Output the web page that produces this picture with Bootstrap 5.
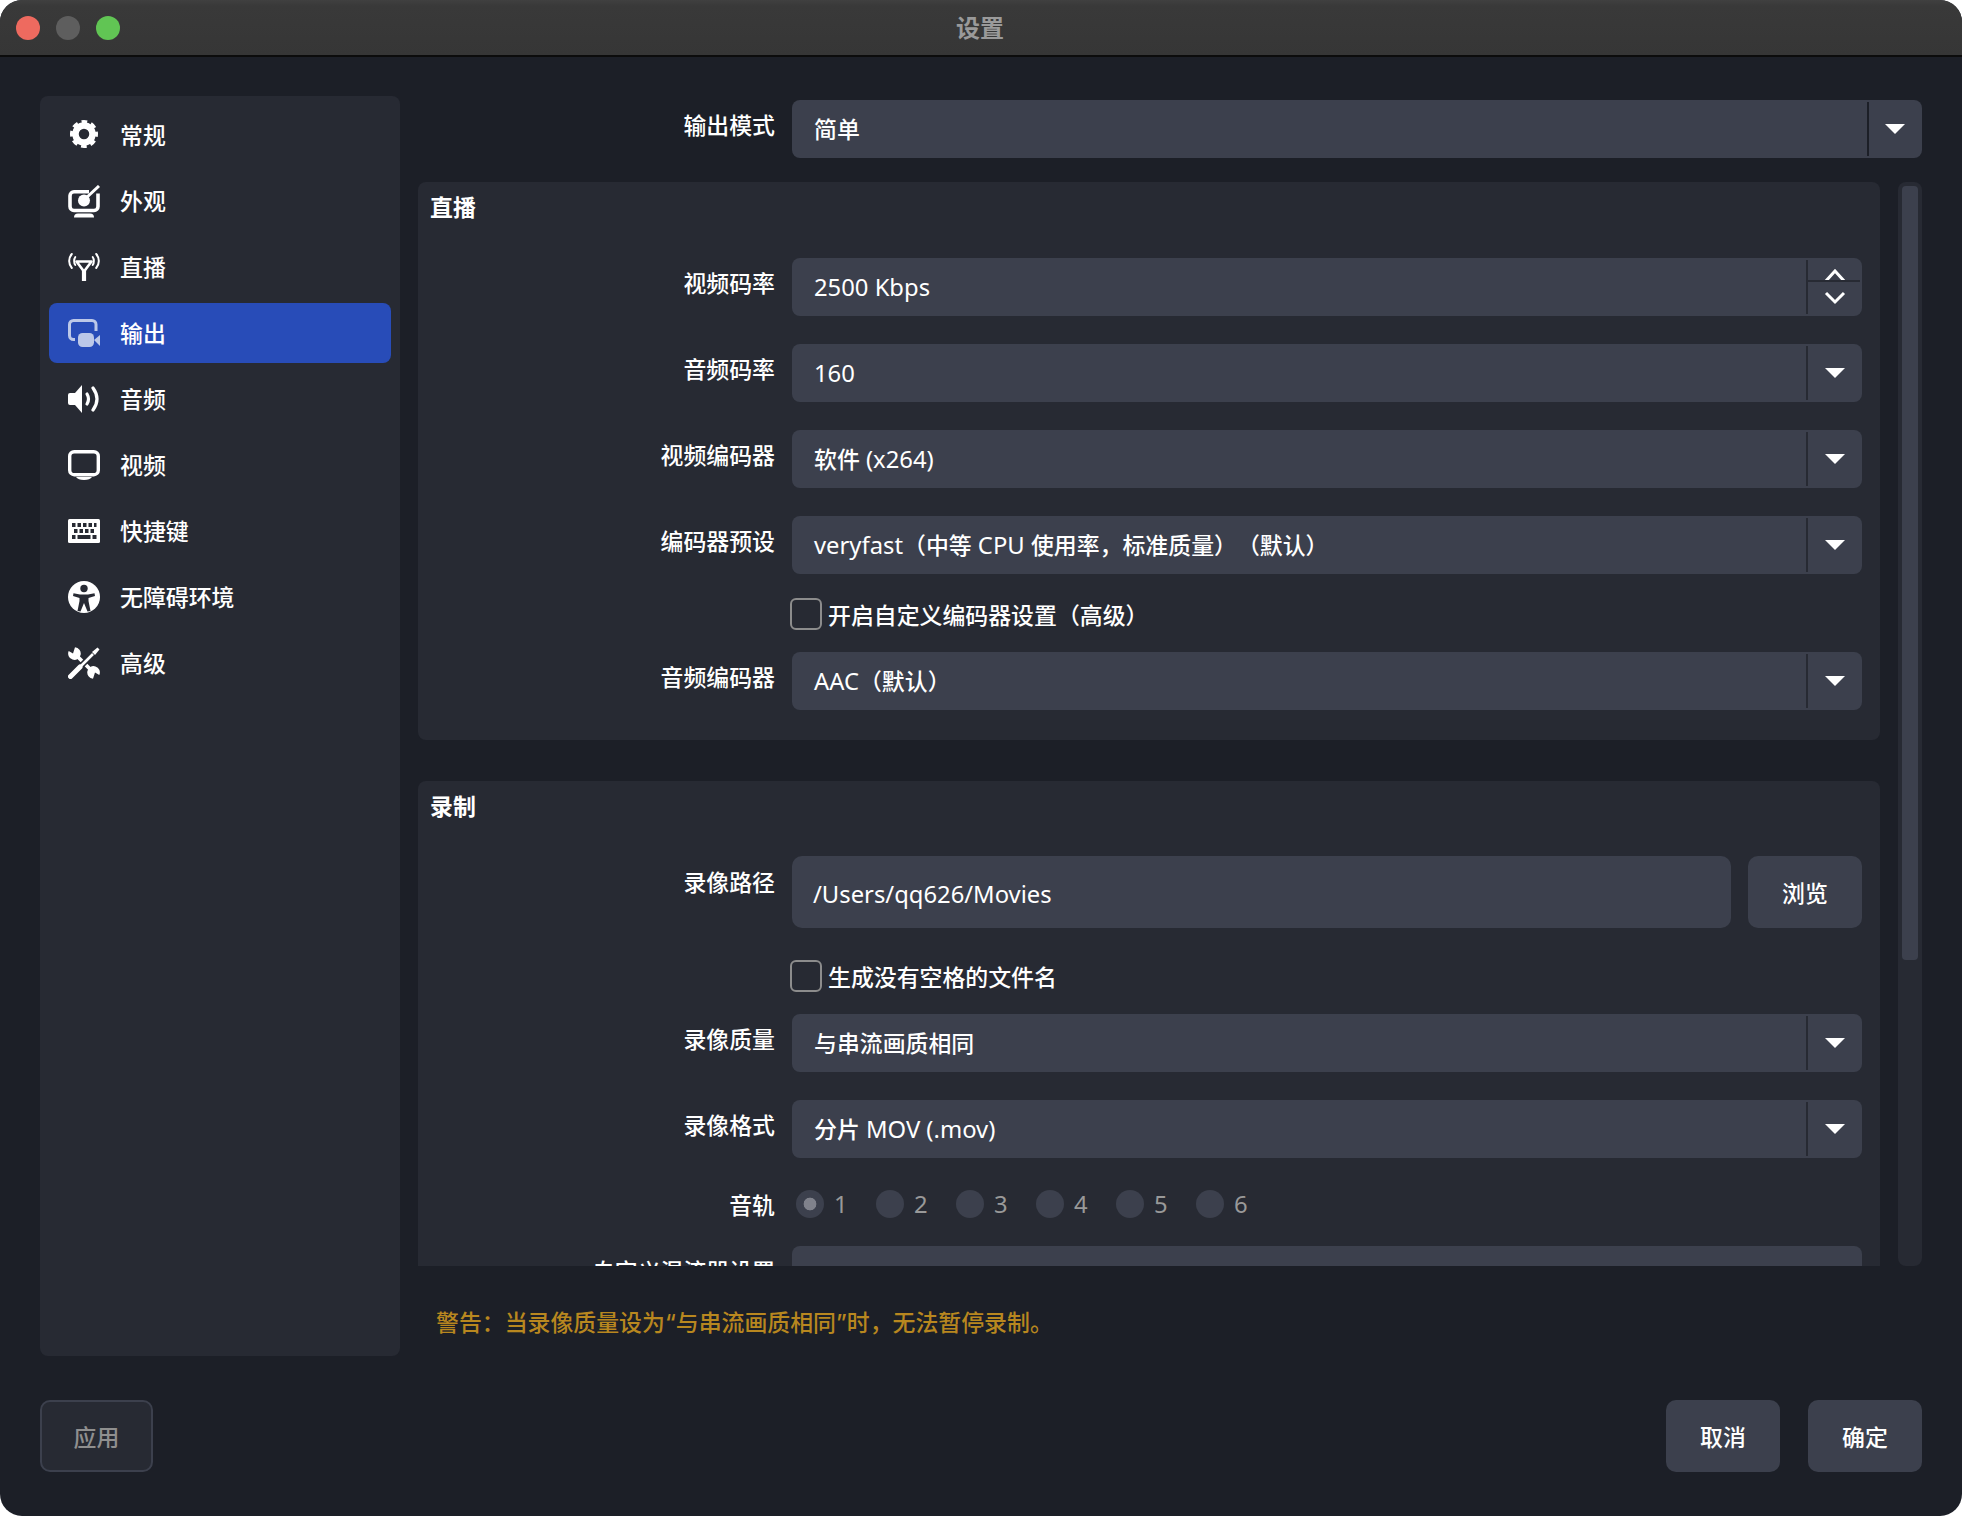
<!DOCTYPE html>
<html lang="zh-CN">
<head>
<meta charset="utf-8">
<title>设置</title>
<link href="https://cdn.jsdelivr.net/npm/bootstrap@5.3.0/dist/css/bootstrap.min.css" rel="stylesheet">
<style>
html,body{height:100%;margin:0;background:#fff}
body{font-family:"Noto Sans CJK SC","Noto Sans",sans-serif;font-size:22.9px;color:#fff;overflow:hidden;text-spacing-trim:space-all}
.lt{font-family:"Noto Sans",sans-serif;font-size:23.8px;font-weight:400}
.qt{font-family:"Inter",sans-serif}
.win{width:1962px;height:1516px;background:#1c1f27;border-radius:22px;overflow:hidden}
.tbar{height:57px;background:linear-gradient(#404040,#393939 6px,#363636);border-bottom:2px solid #0c0c0c;position:relative;flex:none}
.light{width:24px;height:24px;border-radius:50%}
.lights{padding-left:16px;gap:16px;height:55px}
.wtitle{position:absolute;left:0;right:0;top:0;line-height:53px;text-align:center;color:#9a9a9a;font-weight:700;font-size:24px;padding-right:2px}
.wbody{padding:39px 40px 44px}
.side{width:360px;height:1260px;background:#272a33;border-radius:8px;padding:9px;flex:none;gap:6px}
.side .nav-link{height:60px;color:#fff;padding:0 0 0 19px;gap:20px;border-radius:8px;font-weight:500;line-height:1;font-size:22.9px}
.side .nav-link.active{background:#284cb8;color:#fff}
.side .nav-link span{margin-bottom:2px}
.ico{width:32px;flex:none;display:block}
.rcol{margin-left:18px;width:1504px;padding-top:4px}
.frow{gap:17px}
.flabel{width:357px;text-align:right;font-weight:500;margin:0 0 9px;flex:none;padding:0}
.ctl.input-group{height:58px;flex:1 1 0;width:auto;flex-wrap:nowrap;background:#3c404d;border-radius:8px;padding:2px;min-width:0}
.ctl .form-control{background:transparent;border:0;color:#fff;font-size:22.9px;font-weight:500;padding:0 0 0 20px;line-height:53.5px;border-radius:0;font-family:inherit;white-space:pre;height:54px}
.ctl .input-group-text{width:54px;background:transparent;border:0;border-left:2px solid #272a33;border-radius:0!important;padding:0 0 0 1px;justify-content:center;margin:0!important}
.ctl.top .input-group-text{border-left-color:#1c1f27;width:53px;padding:0}
.tri{width:20px;height:10px;display:block}
.ctl .spin{flex-direction:column;align-items:stretch;padding:0}
.spin span{flex:1 1 0;display:flex;align-items:center;justify-content:center;overflow:hidden;padding-left:1px}
.spin span:first-child{flex:0 0 22px;border-bottom:2px solid #272a33;align-items:flex-end}
.spin svg{display:block;flex:none}
.scrollrow{gap:18px;margin-top:24px;height:1084px}
.scrollpane{width:1462px;height:1084px;overflow:hidden;flex:none}
.grp{background:#272a33;border-radius:8px;padding:0 18px 30px 0}
.grp+.grp{margin-top:41px}
.gtitle{padding-left:12px;font-weight:700;height:76px;padding-top:8px;line-height:32px;margin:0;font-size:22.9px}
.g2 .gtitle{height:75px;padding-top:8px}
.mb-row{margin-bottom:28px}
.chk{padding-left:372px;gap:6px;height:32px}
.chk .form-check-input{width:32px;height:32px;margin:0;background-color:transparent;border:2px solid #8c8c8c;border-radius:6px;float:none;flex:none}
.chk label{line-height:29px;padding-top:1px;font-weight:500}
.c1{margin:24px 0 22px}
.c2{margin:32px 0 22px}
.pathlabel.flabel{margin-bottom:22px}
.tfield.form-control{height:72px;flex:1 1 0;width:auto;background:#3c404d;border:0;border-radius:10px;color:#fff;font-size:22.9px;padding:0 21px;line-height:74px;white-space:pre}
.btnx.btn{width:114px;height:72px;background:#3c404d;border:0;border-radius:10px;color:#fff;font-size:22.9px;font-weight:500;padding:0;flex:none}
.btnx.off.btn{width:113px;background:#272a33;border:2px solid #3c404d;color:#8f8f8f;opacity:1}
.radios{height:28px;margin-bottom:28px;margin-top:32px}
.rset{margin-left:4px}
.rit{width:80px;gap:10px;margin:0;padding:0;min-height:0;flex:none}
.rit .form-check-input{width:28px;height:28px;background-color:#3c404d;border:0;margin:0;float:none;opacity:1;background-image:none;flex:none}
.rit .form-check-input:checked{background-image:radial-gradient(circle,#80828c 6px,transparent 6.7px);background-color:#3c404d}
.rit label{opacity:1!important;color:#999;line-height:30px}
.sbar{width:24px;height:1084px;background:#272a33;border-radius:8px;padding:4px;flex:none}
.sthumb{height:774px;background:#3c404d;border-radius:4px}
.warn{color:#b8871f;font-weight:500;padding-left:18px;margin-top:41px;line-height:28px}
.fbar{margin-top:44px}
.fgap{gap:28px}
</style>
</head>
<body>
<div class="win d-flex flex-column">
  <div class="tbar">
    <div class="lights d-flex align-items-center">
      <div class="light" style="background:#ee6a5f"></div>
      <div class="light" style="background:#5e5e5e"></div>
      <div class="light" style="background:#61c554"></div>
    </div>
    <div class="wtitle">设置</div>
  </div>
  <div class="wbody flex-grow-1">
    <div class="d-flex">
      <div class="side nav nav-pills flex-column flex-nowrap">
        <a class="nav-link d-flex align-items-center" href="#">
          <svg class="ico" viewBox="0 0 32 32" height="32"><circle cx="16" cy="15" r="8.500" fill="none" stroke="#fff" stroke-width="6.500"/><circle cx="16" cy="15" r="12.300" fill="none" stroke="#fff" stroke-width="3.400" stroke-dasharray="5.600 4.060" stroke-dashoffset="2.800"/></svg><span>常规</span></a>
        <a class="nav-link d-flex align-items-center" href="#">
          <svg class="ico" viewBox="0 0 32 33" height="33"><path d="M21 6.800H6a4 4 0 0 0-4 4V21.500a4 4 0 0 0 4 4h20a4 4 0 0 0 4-4V8.500" fill="none" stroke="#fff" stroke-width="3.600"/><circle cx="16" cy="15.500" r="6" fill="#fff"/><path d="M17 14 31 1" stroke="#fff" stroke-width="3" fill="none"/><path d="M6 32.500a4 4 0 0 1 4-4h12a4 4 0 0 1 4 4z" fill="#fff"/></svg><span>外观</span></a>
        <a class="nav-link d-flex align-items-center" href="#">
          <svg class="ico" viewBox="0 0 32 28" height="28"><path d="M8.500 8.500H23.500L16 18.500Z" fill="none" stroke="#fff" stroke-width="2.600" stroke-linejoin="round"/><path d="M16 17V28" stroke="#fff" stroke-width="4.200"/><g fill="none" stroke="#fff" stroke-width="2" stroke-linecap="round"><path d="M3.800 1C.3 5 .3 11 3.800 15"/><path d="M7.300 4C5.800 6 5.800 10 7.300 12"/><path d="M28.200 1C31.700 5 31.700 11 28.200 15"/><path d="M24.700 4C26.200 6 26.200 10 24.700 12"/></g></svg><span>直播</span></a>
        <a class="nav-link active d-flex align-items-center" href="#">
          <svg class="ico" viewBox="0 0 32 28" height="28"><path d="M7 20.500H5.500a4 4 0 0 1-4-4V5.500a4 4 0 0 1 4-4H24a4 4 0 0 1 4 4V12" fill="none" stroke="#bcc8e8" stroke-width="3"/><rect x="10" y="14" width="16" height="14" rx="4.500" fill="#bcc8e8"/><path d="M26 21 32 16V27Z" fill="#bcc8e8"/></svg><span>输出</span></a>
        <a class="nav-link d-flex align-items-center" href="#">
          <svg class="ico" viewBox="0 0 32 28" height="28"><path d="M14 0 7 8H2Q0 8 0 10V18Q0 20 2 20H7L14 28Z" fill="#fff"/><g fill="none" stroke="#fff" stroke-width="3.200" stroke-linecap="round"><path d="M19 9Q22 14 19 19"/><path d="M25 3Q33 14 25 25"/></g></svg><span>音频</span></a>
        <a class="nav-link d-flex align-items-center" href="#">
          <svg class="ico" viewBox="0 0 32 30" height="30"><rect x="1.700" y="1.700" width="28.600" height="23" rx="4.500" fill="none" stroke="#fff" stroke-width="3.400"/><path d="M8 27H24Q22 30 16 30T8 27Z" fill="#fff"/></svg><span>视频</span></a>
        <a class="nav-link d-flex align-items-center" href="#">
          <svg class="ico" viewBox="0 0 32 24" height="24"><rect width="32" height="24" rx="1.500" fill="#fff"/><g fill="#272a33"><rect x="4" y="4" width="3.500" height="4"/><rect x="9.500" y="4" width="3.500" height="4"/><rect x="15" y="4" width="3.500" height="4"/><rect x="20.500" y="4" width="3.500" height="4"/><rect x="26" y="4" width="2.500" height="4"/><rect x="6" y="10" width="3.500" height="4"/><rect x="11.500" y="10" width="3.500" height="4"/><rect x="17" y="10" width="3.500" height="4"/><rect x="22.500" y="10" width="3.500" height="4"/><rect x="4" y="16" width="3.500" height="4"/><rect x="9.500" y="16" width="13" height="4"/><rect x="24.500" y="16" width="4" height="4"/></g></svg><span>快捷键</span></a>
        <a class="nav-link d-flex align-items-center" href="#">
          <svg class="ico" viewBox="0 0 32 32" height="32"><circle cx="16" cy="16" r="16" fill="#fff"/><circle cx="16" cy="7.500" r="3.700" fill="#272a33"/><path d="M5.500 12.300 12 13.500H20L26.500 12.300 27 15 20.500 17V20L22.500 30 19.500 30.500 16 22 12.500 30.500 9.500 30 11.500 20V17L5 15Z" fill="#272a33"/></svg><span>无障碍环境</span></a>
        <a class="nav-link d-flex align-items-center" href="#">
          <svg class="ico" viewBox="0 0 32 32" height="32"><path d="M.7 4 5 6.500 7 .3A6.300 6.300 0 1 1 .7 4Z" fill="#fff"/><path d="M31.300 28 27 25.500 25 31.700A6.300 6.300 0 1 1 31.300 28Z" fill="#fff"/><path d="M9 9 23 23" stroke="#fff" stroke-width="3.800"/><path d="M5 27 25 7" stroke="#272a33" stroke-width="6"/><path d="M2.500 29.500 12 20" stroke="#fff" stroke-width="5" stroke-linecap="round"/><path d="M11 21 25 7" stroke="#fff" stroke-width="2.600"/><path d="M24 5 29.500 .5 31.500 2.500 27 8Z" fill="#fff"/></svg><span>高级</span></a>
      </div>
      <div class="rcol">
        <div class="frow d-flex align-items-center">
          <label class="flabel form-label">输出模式</label>
          <div class="ctl top input-group"><div class="form-control">简单</div><div class="input-group-text"><svg class="tri" viewBox="0 0 20 10"><path d="M0 0H20L10 10Z" fill="#fff"/></svg></div></div>
        </div>
        <div class="scrollrow d-flex">
          <div class="scrollpane">
            <section class="grp g1">
              <h2 class="gtitle">直播</h2>
              <div class="frow mb-row d-flex align-items-center"><label class="flabel form-label">视频码率</label>
                <div class="ctl input-group"><div class="form-control"><span class="lt">2500 Kbps</span></div><div class="input-group-text spin d-flex"><span><svg width="22" height="11" viewBox="0 0 22 11"><path d="M1 13 11 2 21 13" fill="none" stroke="#fff" stroke-width="3"/></svg></span><span><svg width="22" height="14" viewBox="0 0 22 14"><path d="M2 2 11 11 20 2" fill="none" stroke="#fff" stroke-width="3"/></svg></span></div></div></div>
              <div class="frow mb-row d-flex align-items-center"><label class="flabel form-label">音频码率</label>
                <div class="ctl input-group"><div class="form-control"><span class="lt">160</span></div><div class="input-group-text"><svg class="tri" viewBox="0 0 20 10"><path d="M0 0H20L10 10Z" fill="#fff"/></svg></div></div></div>
              <div class="frow mb-row d-flex align-items-center"><label class="flabel form-label">视频编码器</label>
                <div class="ctl input-group"><div class="form-control">软件<span class="lt"> (x264)</span></div><div class="input-group-text"><svg class="tri" viewBox="0 0 20 10"><path d="M0 0H20L10 10Z" fill="#fff"/></svg></div></div></div>
              <div class="frow d-flex align-items-center"><label class="flabel form-label">编码器预设</label>
                <div class="ctl input-group"><div class="form-control"><span class="lt">veryfast</span>（中等<span class="lt"> CPU </span>使用率，标准质量）（默认）</div><div class="input-group-text"><svg class="tri" viewBox="0 0 20 10"><path d="M0 0H20L10 10Z" fill="#fff"/></svg></div></div></div>
              <div class="chk c1 d-flex align-items-center"><input class="form-check-input" type="checkbox" id="c1"><label for="c1">开启自定义编码器设置（高级）</label></div>
              <div class="frow d-flex align-items-center"><label class="flabel form-label">音频编码器</label>
                <div class="ctl input-group"><div class="form-control"><span class="lt">AAC</span>（默认）</div><div class="input-group-text"><svg class="tri" viewBox="0 0 20 10"><path d="M0 0H20L10 10Z" fill="#fff"/></svg></div></div></div>
            </section>
            <section class="grp g2">
              <h2 class="gtitle">录制</h2>
              <div class="frow d-flex align-items-center"><label class="flabel form-label pathlabel">录像路径</label>
                <div class="tfield form-control"><span class="lt">/Users/qq626/Movies</span></div><button class="btnx btn" type="button">浏览</button></div>
              <div class="chk c2 d-flex align-items-center"><input class="form-check-input" type="checkbox" id="c2"><label for="c2">生成没有空格的文件名</label></div>
              <div class="frow mb-row d-flex align-items-center"><label class="flabel form-label">录像质量</label>
                <div class="ctl input-group"><div class="form-control">与串流画质相同</div><div class="input-group-text"><svg class="tri" viewBox="0 0 20 10"><path d="M0 0H20L10 10Z" fill="#fff"/></svg></div></div></div>
              <div class="frow d-flex align-items-center"><label class="flabel form-label">录像格式</label>
                <div class="ctl input-group"><div class="form-control">分片<span class="lt"> MOV (.mov)</span></div><div class="input-group-text"><svg class="tri" viewBox="0 0 20 10"><path d="M0 0H20L10 10Z" fill="#fff"/></svg></div></div></div>
              <div class="frow radios d-flex align-items-center"><label class="flabel form-label mb-0">音轨</label>
                <div class="rset d-flex">
                  <div class="rit form-check d-flex align-items-center"><input class="form-check-input" type="radio" name="t" checked disabled><label class="lt">1</label></div>
                  <div class="rit form-check d-flex align-items-center"><input class="form-check-input" type="radio" name="t" disabled><label class="lt">2</label></div>
                  <div class="rit form-check d-flex align-items-center"><input class="form-check-input" type="radio" name="t" disabled><label class="lt">3</label></div>
                  <div class="rit form-check d-flex align-items-center"><input class="form-check-input" type="radio" name="t" disabled><label class="lt">4</label></div>
                  <div class="rit form-check d-flex align-items-center"><input class="form-check-input" type="radio" name="t" disabled><label class="lt">5</label></div>
                  <div class="rit form-check d-flex align-items-center"><input class="form-check-input" type="radio" name="t" disabled><label class="lt">6</label></div>
                </div></div>
              <div class="frow d-flex align-items-center"><label class="flabel form-label">自定义混流器设置</label>
                <div class="ctl input-group"><div class="form-control"></div></div></div>
            </section>
          </div>
          <div class="sbar"><div class="sthumb"></div></div>
        </div>
        <div class="warn">警告：当录像质量设为<span class="qt">“</span>与串流画质相同<span class="qt">”</span>时，无法暂停录制。</div>
      </div>
    </div>
    <div class="fbar d-flex justify-content-between">
      <button class="btnx off btn" type="button">应用</button>
      <div class="d-flex fgap"><button class="btnx btn" type="button">取消</button><button class="btnx btn" type="button">确定</button></div>
    </div>
  </div>
</div>
<script src="https://cdn.jsdelivr.net/npm/bootstrap@5.3.0/dist/js/bootstrap.bundle.min.js"></script>
</body>
</html>
